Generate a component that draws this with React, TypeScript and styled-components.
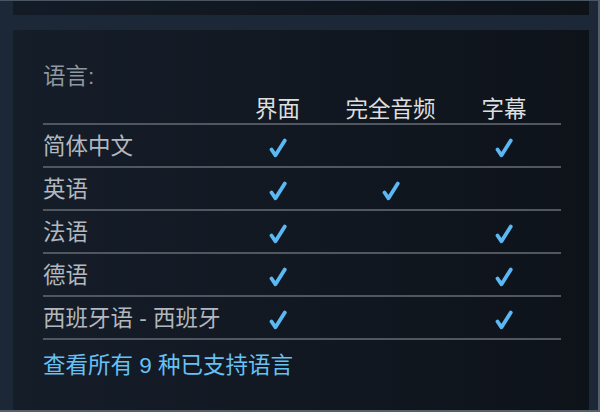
import React from "react";
import styled, { createGlobalStyle } from "styled-components";

const Global = createGlobalStyle`
  html, body { margin: 0; padding: 0; background: #1b2838; }
  * { box-sizing: border-box; }
`;

const Frame = styled.div`
  width: 600px;
  height: 412px;
  background: #1c2838;
  border-top: 1px solid #4a5563;
  border-right: 2px solid #56606b;
  border-bottom: 2px solid #56606b;
  padding: 0 9px 0 13px;
  display: flex;
  flex-direction: column;
  gap: 15px;
  font-family: "Liberation Sans", "Noto Sans CJK SC", sans-serif;
  overflow: hidden;
`;

const TopPanel = styled.div`
  height: 14px;
  flex: none;
  background: linear-gradient(to right, #131b26, #0e131a);
`;

const MainPanel = styled.div`
  flex: 1;
  background: linear-gradient(to right, #151d29, #0e131a);
  padding: 35px 28px 0 30px;
  display: flex;
  flex-direction: column;
`;

const Title = styled.div`
  font-size: 22.5px;
  line-height: 24px;
  height: 24px;
  color: #8f98a0;
`;

const Grid = styled.div`
  display: grid;
  grid-template-columns: 178px 113px 113px 1fr;
`;

const HeaderRow = styled(Grid)`
  height: 36px;
  align-items: end;
  padding-bottom: 1px;
  border-bottom: 2px solid #50575f;
`;

const HeadCell = styled.div`
  font-size: 22.5px;
  line-height: 24px;
  color: #dcdedf;
  text-align: center;
`;

const Row = styled(Grid)`
  height: 43px;
  align-items: center;
  padding-top: 3px;
  border-bottom: 2px solid #50575f;
`;

const NameCell = styled.div`
  font-size: 22.5px;
  line-height: 24px;
  color: #b2b8be;
  white-space: nowrap;
`;

const MarkCell = styled.div`
  display: flex;
  justify-content: center;
  align-items: center;
  height: 24px;
  padding-top: 2px;
`;

const Link = styled.a`
  margin-top: 14px;
  font-size: 22.5px;
  line-height: 24px;
  color: #67c1f5;
  text-decoration: none;
`;

const Check = () => (
  <svg width="18" height="20" viewBox="0 0 18 20">
    <path
      d="M2.5 11.5 L6.5 17.3 L15.8 2.5"
      fill="none"
      stroke="#5cb8f2"
      strokeWidth="3.8"
      strokeLinecap="round"
      strokeLinejoin="round"
    />
  </svg>
);

const rows: [string, boolean, boolean, boolean][] = [
  ["简体中文", true, false, true],
  ["英语", true, true, false],
  ["法语", true, false, true],
  ["德语", true, false, true],
  ["西班牙语 - 西班牙", true, false, true],
];

export default function App() {
  return (
    <>
      <Global />
      <Frame>
        <TopPanel />
        <MainPanel>
          <Title>语言:</Title>
          <HeaderRow>
            <div />
            <HeadCell>界面</HeadCell>
            <HeadCell>完全音频</HeadCell>
            <HeadCell>字幕</HeadCell>
          </HeaderRow>
          {rows.map(([name, a, b, c]) => (
            <Row key={name}>
              <NameCell>{name}</NameCell>
              <MarkCell>{a && <Check />}</MarkCell>
              <MarkCell>{b && <Check />}</MarkCell>
              <MarkCell>{c && <Check />}</MarkCell>
            </Row>
          ))}
          <Link href="#">查看所有 9 种已支持语言</Link>
        </MainPanel>
      </Frame>
    </>
  );
}
